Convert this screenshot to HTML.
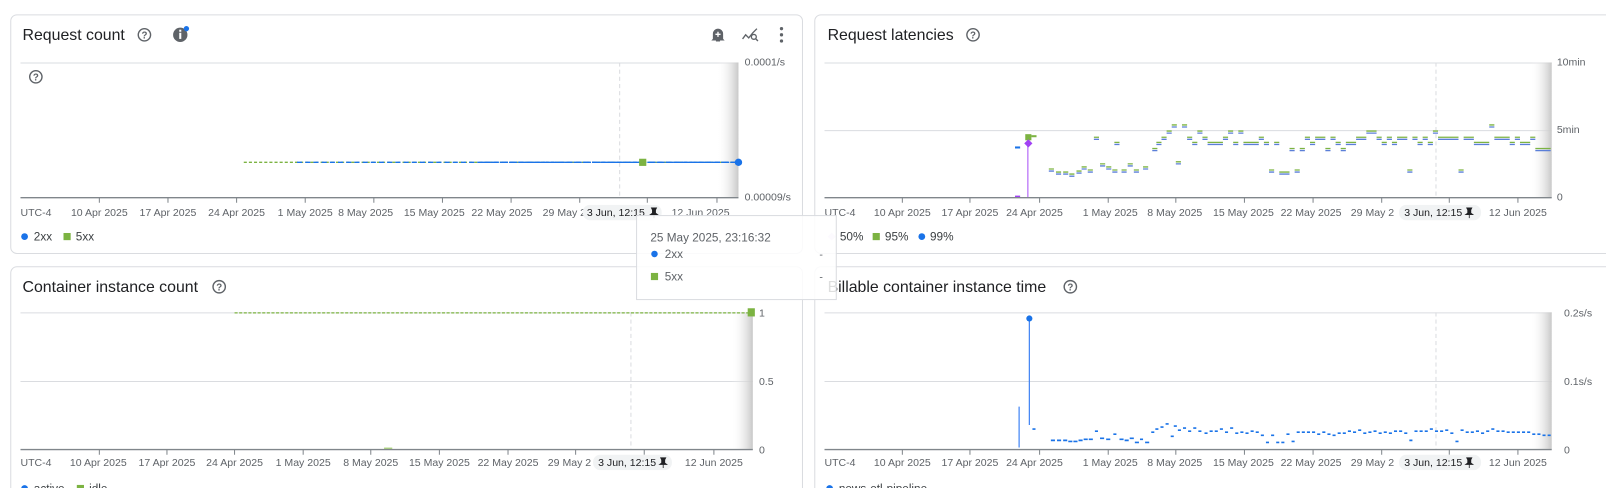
<!DOCTYPE html>
<html><head><meta charset="utf-8"><style>
html,body{margin:0;padding:0;background:#fff;overflow:hidden;width:1606px;height:488px}
svg{display:block}
text{font-family:"Liberation Sans",Arial,sans-serif}
.t{font-size:15.5px;fill:#202124}
.a{font-size:10.3px;fill:#5f6368}
.l{font-size:11.5px;fill:#3c4043}
.g{stroke:#dadce0;stroke-width:1}
.ax{stroke:#80868b;stroke-width:1.3}
</style></head><body>
<svg width="1606" height="488" viewBox="0 0 1568 476.5" preserveAspectRatio="none" xmlns="http://www.w3.org/2000/svg">
<defs>
<linearGradient id="sh" x1="0" x2="1" y1="0" y2="0"><stop offset="0" stop-color="#fff" stop-opacity="0"/><stop offset="1" stop-color="#c8c8c8"/></linearGradient>
<g id="help"><circle r="6" fill="none" stroke="#5f6368" stroke-width="1.4"/><text x="0" y="3.6" text-anchor="middle" style="font-size:9.5px;fill:#5f6368;font-weight:bold">?</text></g>
</defs>
<!-- cards -->
<rect x="10.5" y="14.5" width="773" height="233" rx="6" fill="#fff" stroke="#dadce0"/>
<rect x="795.5" y="14.5" width="800" height="233" rx="6" fill="#fff" stroke="#dadce0"/>
<rect x="10.5" y="260.5" width="773" height="230" rx="6" fill="#fff" stroke="#dadce0"/>
<rect x="795.5" y="260.5" width="800" height="230" rx="6" fill="#fff" stroke="#dadce0"/>

<!-- ===== Chart 1 ===== -->
<text x="22" y="39" class="t">Request count</text>
<use href="#help" x="141" y="34"/>
<circle cx="176" cy="34" r="7" fill="#5f6368"/><rect x="175" y="32" width="2" height="6" fill="#fff"/><rect x="175" y="29" width="2" height="2" fill="#fff"/><circle cx="182" cy="28" r="2.6" fill="#1a73e8"/>
<path d="M696 38 v-5 a5 5 0 0 1 10 0 v5 l1.5 1.5 h-13 z" fill="#5f6368"/><rect x="699" y="38.5" width="4" height="2" fill="#5f6368"/><path d="M701 31v5M698.5 33.5h5" stroke="#fff" stroke-width="1.3"/>
<path d="M725 38 l3 -4 l3 3 l4 -5 l4 -4" fill="none" stroke="#5f6368" stroke-width="1.3"/><circle cx="736" cy="36" r="2.4" fill="none" stroke="#5f6368" stroke-width="1.3"/><path d="M737.5 37.5l2.5 2.5" stroke="#5f6368" stroke-width="1.4"/>
<circle cx="763" cy="28" r="1.6" fill="#5f6368"/><circle cx="763" cy="34" r="1.6" fill="#5f6368"/><circle cx="763" cy="40" r="1.6" fill="#5f6368"/>
<line x1="20" y1="61.5" x2="721" y2="61.5" class="g"/>
<rect x="700" y="61" width="21" height="132" fill="url(#sh)"/>
<use href="#help" x="35" y="75"/>
<line x1="605" y1="61" x2="605" y2="193" stroke="#dadce0" stroke-dasharray="4 3"/>
<line x1="238" y1="158.5" x2="720" y2="158.5" stroke="#7cb342" stroke-width="1.3" stroke-dasharray="3 2"/>
<line x1="290" y1="158.5" x2="720" y2="158.5" stroke="#1a73e8" stroke-width="1.3" stroke-dasharray="5 3"/>
<line x1="470" y1="158.5" x2="720" y2="158.5" stroke="#1a73e8" stroke-width="1.3" stroke-dasharray="8 1"/>
<rect x="624" y="155" width="7" height="7" fill="#7cb342"/>
<circle cx="721" cy="158.5" r="3.6" fill="#1a73e8"/>
<line x1="20" y1="193" x2="721" y2="193" class="ax"/>
<g stroke="#80868b"><path d="M97 193v5M164 193v5M231 193v5M298 193v5M365 193v5M432 193v5M499 193v5M566 193v5M632 193v5M700 193v5"/></g>
<text x="727" y="64" class="a">0.0001/s</text><text x="727" y="196" class="a">0.00009/s</text>
<g class="a" text-anchor="middle"><text x="20" y="211" text-anchor="start">UTC-4</text><text x="97" y="211">10 Apr 2025</text><text x="164" y="211">17 Apr 2025</text><text x="231" y="211">24 Apr 2025</text><text x="298" y="211">1 May 2025</text><text x="357" y="211">8 May 2025</text><text x="424" y="211">15 May 2025</text><text x="490" y="211">22 May 2025</text><text x="551" y="211">29 May 2</text><text x="684" y="211">12 Jun 2025</text></g>
<rect x="569" y="200" width="77" height="15" rx="7" fill="#f1f3f4"/><text x="573" y="211" class="a" style="fill:#202124">3 Jun, 12:15</text><path d="M636 203h5l-1 2v3l2 1.5h-7l2-1.5v-3zM638.5 209v4" fill="#202124" stroke="#202124" stroke-width=".8"/>
<circle cx="24" cy="231" r="3.3" fill="#1a73e8"/><text x="33" y="235" class="l">2xx</text>
<rect x="62" y="227.5" width="7" height="7" fill="#7cb342"/><text x="74" y="235" class="l">5xx</text>

<!-- ===== Chart 2 ===== -->
<text x="808" y="39" class="t">Request latencies</text>
<use href="#help" x="950" y="34"/>
<line x1="805" y1="61.5" x2="1515" y2="61.5" class="g"/>
<line x1="805" y1="127.5" x2="1515" y2="127.5" class="g"/>
<rect x="1494" y="61" width="21" height="132" fill="url(#sh)"/>
<line x1="1402" y1="61" x2="1402" y2="193" stroke="#dadce0" stroke-dasharray="4 3"/>
<line x1="1003.5" y1="193" x2="1003.5" y2="140" stroke="#c58af9" stroke-width="1.5"/>
<rect x="1001" y="131" width="6" height="6" fill="#7cb342"/>
<path d="M1004 136l4 4-4 4-4-4z" fill="#a142f4"/>
<rect x="991" y="143" width="5" height="2" fill="#1a73e8"/><rect x="991" y="191" width="5" height="2" fill="#a142f4"/><rect x="1007" y="132" width="5" height="2" fill="#7cb342"/>
<g id="pts">
<path fill="none" stroke="#7cb342" stroke-width="1.3" d="M1024 165h5M1031 168h5M1038 168h5M1044 170h5M1051 167h5M1056 163h5M1062 166h5M1068 134h5M1074 160h5M1080 163h5M1086 166h5M1088 139h5M1095 166h5M1101 160h5M1107 166h5M1116 163h5M1125 145h5M1129 139h5M1134 134h5M1139 128h5M1144 122h5M1148 158h5M1154 122h5M1159 134h5M1164 139h5M1169 128h5M1174 134h5M1179 139h5M1184 139h5M1189 139h5M1194 134h5M1199 128h5M1204 139h5M1209 128h5M1214 139h5M1219 139h5M1224 139h5M1229 134h5M1234 139h5M1239 166h5M1244 139h5M1249 168h5M1254 168h5M1259 145h5M1264 166h5M1269 145h5M1274 134h5M1279 139h5M1284 134h5M1289 134h5M1294 145h5M1299 134h5M1304 139h5M1309 145h5M1314 139h5M1319 139h5M1324 134h5M1329 134h5M1334 128h5M1339 128h5M1344 134h5M1349 139h5M1354 134h5M1359 139h5M1364 134h5M1369 134h5M1374 166h5M1379 134h5M1384 139h5M1389 134h5M1394 139h5M1399 128h5M1404 134h5M1409 134h5M1414 134h5M1419 134h5M1424 166h5M1429 134h5M1434 134h5M1439 139h5M1444 139h5M1449 139h5M1454 122h5M1459 134h5M1464 134h5M1469 134h5M1474 139h5M1479 134h5M1484 139h5M1489 139h5M1494 134h5M1499 145h5M1504 145h5M1509 145h5"/>
</g>
<g transform="translate(0,2)"><path fill="none" stroke="#5b7fd8" stroke-width="1.3" d="M1024 165h5M1031 168h5M1038 168h5M1044 170h5M1051 167h5M1056 163h5M1062 166h5M1068 134h5M1074 160h5M1080 163h5M1086 166h5M1088 139h5M1095 166h5M1101 160h5M1107 166h5M1116 163h5M1125 145h5M1129 139h5M1134 134h5M1139 128h5M1144 122h5M1148 158h5M1154 122h5M1159 134h5M1164 139h5M1169 128h5M1174 134h5M1179 139h5M1184 139h5M1189 139h5M1194 134h5M1199 128h5M1204 139h5M1209 128h5M1214 139h5M1219 139h5M1224 139h5M1229 134h5M1234 139h5M1239 166h5M1244 139h5M1249 168h5M1254 168h5M1259 145h5M1264 166h5M1269 145h5M1274 134h5M1279 139h5M1284 134h5M1289 134h5M1294 145h5M1299 134h5M1304 139h5M1309 145h5M1314 139h5M1319 139h5M1324 134h5M1329 134h5M1334 128h5M1339 128h5M1344 134h5M1349 139h5M1354 134h5M1359 139h5M1364 134h5M1369 134h5M1374 166h5M1379 134h5M1384 139h5M1389 134h5M1394 139h5M1399 128h5M1404 134h5M1409 134h5M1414 134h5M1419 134h5M1424 166h5M1429 134h5M1434 134h5M1439 139h5M1444 139h5M1449 139h5M1454 122h5M1459 134h5M1464 134h5M1469 134h5M1474 139h5M1479 134h5M1484 139h5M1489 139h5M1494 134h5M1499 145h5M1504 145h5M1509 145h5"/></g>
<line x1="805" y1="193" x2="1515" y2="193" class="ax"/>
<g stroke="#80868b"><path d="M881 193v5M947 193v5M1015 193v5M1082 193v5M1148 193v5M1215 193v5M1282 193v5M1349 193v5M1415 193v5M1482 193v5"/></g>
<text x="1520" y="64" class="a">10min</text><text x="1520" y="130" class="a">5min</text><text x="1520" y="196" class="a">0</text>
<g class="a" text-anchor="middle"><text x="805" y="211" text-anchor="start">UTC-4</text><text x="881" y="211">10 Apr 2025</text><text x="947" y="211">17 Apr 2025</text><text x="1010" y="211">24 Apr 2025</text><text x="1084" y="211">1 May 2025</text><text x="1147" y="211">8 May 2025</text><text x="1214" y="211">15 May 2025</text><text x="1280" y="211">22 May 2025</text><text x="1340" y="211">29 May 2</text><text x="1482" y="211">12 Jun 2025</text></g>
<rect x="1366" y="200" width="80" height="15" rx="7" fill="#f1f3f4"/><text x="1371" y="211" class="a" style="fill:#202124">3 Jun, 12:15</text><path d="M1432 203h5l-1 2v3l2 1.5h-7l2-1.5v-3zM1434.5 209v4" fill="#202124" stroke="#202124" stroke-width=".8"/>
<path d="M812 227l4 4-4 4-4-4z" fill="#e8def8"/><text x="820" y="235" class="l">50%</text>
<rect x="852" y="227.5" width="7" height="7" fill="#7cb342"/><text x="864" y="235" class="l">95%</text>
<circle cx="900" cy="231" r="3.3" fill="#1a73e8"/><text x="908" y="235" class="l">99%</text>

<!-- ===== Chart 3 ===== -->
<text x="22" y="285" class="t">Container instance count</text>
<use href="#help" x="214" y="280"/>
<line x1="20" y1="305.5" x2="735" y2="305.5" class="g"/>
<line x1="20" y1="372.5" x2="735" y2="372.5" class="g"/>
<rect x="714" y="305" width="21" height="134" fill="url(#sh)"/>
<line x1="616" y1="305" x2="616" y2="439" stroke="#dadce0" stroke-dasharray="4 3"/>
<line x1="229" y1="305.5" x2="733" y2="305.5" stroke="#7cb342" stroke-width="1.2" stroke-dasharray="3 1.5"/>
<rect x="730" y="301" width="7" height="8" fill="#7cb342"/>
<rect x="375" y="437" width="8" height="2" fill="#aed581"/>
<line x1="20" y1="439" x2="735" y2="439" class="ax"/>
<g stroke="#80868b"><path d="M97 439v5M163 439v5M229 439v5M296 439v5M362 439v5M429 439v5M496 439v5M562 439v5M629 439v5M697 439v5"/></g>
<text x="741" y="309" class="a">1</text><text x="741" y="376" class="a">0.5</text><text x="741" y="443" class="a">0</text>
<g class="a" text-anchor="middle"><text x="20" y="455" text-anchor="start">UTC-4</text><text x="96" y="455">10 Apr 2025</text><text x="163" y="455">17 Apr 2025</text><text x="229" y="455">24 Apr 2025</text><text x="296" y="455">1 May 2025</text><text x="362" y="455">8 May 2025</text><text x="429" y="455">15 May 2025</text><text x="496" y="455">22 May 2025</text><text x="556" y="455">29 May 2</text><text x="697" y="455">12 Jun 2025</text></g>
<rect x="579" y="444" width="77" height="15" rx="7" fill="#f1f3f4"/><text x="584" y="455" class="a" style="fill:#202124">3 Jun, 12:15</text><path d="M645 447h5l-1 2v3l2 1.5h-7l2-1.5v-3zM647.5 453v4" fill="#202124" stroke="#202124" stroke-width=".8"/>
<circle cx="24" cy="477" r="3.3" fill="#1a73e8"/><text x="33" y="481" class="l">active</text>
<rect x="75" y="473.5" width="7" height="7" fill="#7cb342"/><text x="87" y="481" class="l">idle</text>

<!-- ===== Chart 4 ===== -->
<text x="808" y="285" class="t">Billable container instance time</text>
<use href="#help" x="1045" y="280"/>
<line x1="805" y1="305.5" x2="1515" y2="305.5" class="g"/>
<line x1="805" y1="372.5" x2="1515" y2="372.5" class="g"/>
<rect x="1494" y="305" width="21" height="134" fill="url(#sh)"/>
<line x1="1402" y1="305" x2="1402" y2="439" stroke="#dadce0" stroke-dasharray="4 3"/>
<path d="M995 437V397M1005 415V311" stroke="#4285f4" stroke-width="1.2"/>
<circle cx="1005" cy="311" r="3" fill="#1a73e8"/>
<path fill="none" stroke="#1a73e8" stroke-width="1.6" d="M1008 419h3M1026 430h4M1032 430h4M1038 430h4M1043 431h4M1048 431h4M1053 430h4M1058 429h4M1063 429h4M1069 421h3M1074 428h4M1080 429h4M1087 424h3M1093 429h4M1098 430h4M1103 428h4M1108 432h4M1113 429h3M1118 432h4M1124 422h3M1128 419h3M1133 417h3M1138 414h3M1143 426h3M1146 416h3M1150 420h3M1155 418h3M1160 421h3M1165 418h3M1170 421h3M1176 423h3M1181 421h3M1186 421h3M1191 419h3M1196 422h3M1201 418h3M1206 423h3M1211 422h3M1216 423h3M1221 421h3M1226 422h3M1231 425h3M1236 432h3M1241 425h3M1246 432h3M1251 432h3M1256 424h3M1261 431h3M1266 422h3M1271 422h3M1276 422h3M1281 422h3M1286 424h3M1291 422h3M1296 424h3M1301 425h3M1306 423h3M1311 423h3M1316 421h3M1321 422h3M1326 420h3M1331 423h3M1336 422h3M1341 421h3M1346 423h3M1351 422h3M1356 423h3M1361 421h3M1366 421h3M1371 423h3M1376 430h3M1381 421h3M1386 421h3M1391 421h3M1396 419h3M1401 421h3M1406 421h3M1411 420h3M1416 423h3M1421 431h3M1426 420h3M1431 422h3M1436 422h3M1441 421h3M1446 423h3M1451 421h3M1456 419h3M1461 421h3M1466 421h3M1471 422h3M1476 422h3M1481 422h3M1486 422h3M1491 422h3M1496 424h3M1501 424h3M1506 425h3M1511 425h3"/>
<line x1="805" y1="439" x2="1515" y2="439" class="ax"/>
<g stroke="#80868b"><path d="M881 439v5M947 439v5M1015 439v5M1082 439v5M1148 439v5M1215 439v5M1282 439v5M1349 439v5M1415 439v5M1482 439v5"/></g>
<text x="1527" y="309" class="a">0.2s/s</text><text x="1527" y="376" class="a">0.1s/s</text><text x="1527" y="443" class="a">0</text>
<g class="a" text-anchor="middle"><text x="805" y="455" text-anchor="start">UTC-4</text><text x="881" y="455">10 Apr 2025</text><text x="947" y="455">17 Apr 2025</text><text x="1010" y="455">24 Apr 2025</text><text x="1084" y="455">1 May 2025</text><text x="1147" y="455">8 May 2025</text><text x="1214" y="455">15 May 2025</text><text x="1280" y="455">22 May 2025</text><text x="1340" y="455">29 May 2</text><text x="1482" y="455">12 Jun 2025</text></g>
<rect x="1366" y="444" width="80" height="15" rx="7" fill="#f1f3f4"/><text x="1371" y="455" class="a" style="fill:#202124">3 Jun, 12:15</text><path d="M1432 447h5l-1 2v3l2 1.5h-7l2-1.5v-3zM1434.5 453v4" fill="#202124" stroke="#202124" stroke-width=".8"/>
<circle cx="810" cy="477" r="3.3" fill="#1a73e8"/><text x="819" y="481" class="l">news-etl-pipeline</text>

<!-- tooltip -->
<rect x="621.5" y="210.5" width="195" height="82" fill="#fff" fill-opacity="0.85" stroke="#dadce0"/>
<text x="635" y="236" style="font-size:11.5px;fill:#5f6368">25 May 2025, 23:16:32</text>
<circle cx="639" cy="248" r="3.2" fill="#1a73e8"/><text x="649" y="252" style="font-size:11.5px;fill:#5f6368">2xx</text><text x="800" y="252" class="a">-</text>
<rect x="635.5" y="266.5" width="7" height="7" fill="#7cb342"/><text x="649" y="274" style="font-size:11.5px;fill:#5f6368">5xx</text><text x="800" y="274" class="a">-</text>
</svg>
</body></html>
